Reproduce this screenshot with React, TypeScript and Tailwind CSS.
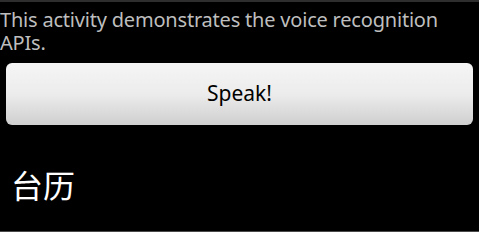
import React from "react";

export default function App() {
  return (
    <div className="w-[479px] h-[232px] bg-black flex flex-col overflow-hidden" style={{ fontFamily: '"Noto Sans", "Noto Sans CJK SC", sans-serif' }}>
      <div className="h-[2px] bg-[#2e2e2e] shrink-0" />
      <p className="text-[20px] leading-[23px] text-[#bebebe] pt-[6px] pl-[0px] tracking-[-0.2px]">
        This activity demonstrates the voice recognition APIs.
      </p>
      <div className="px-[6px] pt-[9px]">
        <button className="w-full h-[62px] rounded-[6px] bg-gradient-to-b from-[#f5f5f5] via-[#ececec] to-[#cfcfcf] text-black text-[21px] flex items-center justify-center">
          Speak!
        </button>
      </div>
      <div className="pl-[11px] pt-[40px] text-white text-[32px] leading-[38px]" style={{ fontFamily: '"Noto Sans CJK SC", sans-serif' }}>
        台历
      </div>
      <div className="flex-1" />
      <div className="h-[1px] bg-[#4a4a4a] shrink-0" />
    </div>
  );
}
